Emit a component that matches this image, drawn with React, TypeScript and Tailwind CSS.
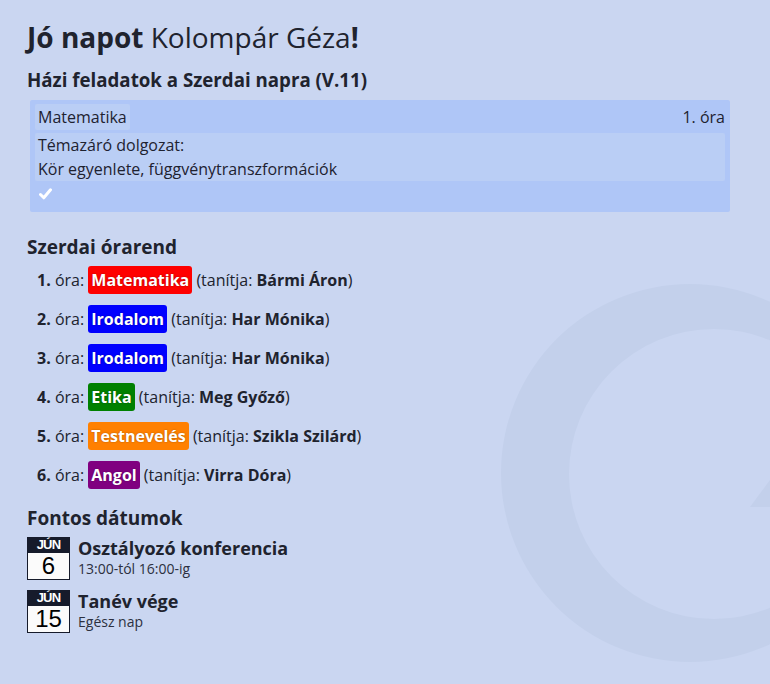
const lessons = [
  { n: 1, subject: "Matematika", color: "bg-[#ff0000]", teacher: "Bármi Áron" },
  { n: 2, subject: "Irodalom", color: "bg-[#0000ff]", teacher: "Har Mónika" },
  { n: 3, subject: "Irodalom", color: "bg-[#0000ff]", teacher: "Har Mónika" },
  { n: 4, subject: "Etika", color: "bg-[#008000]", teacher: "Meg Győző" },
  { n: 5, subject: "Testnevelés", color: "bg-[#ff8000]", teacher: "Szikla Szilárd" },
  { n: 6, subject: "Angol", color: "bg-[#800080]", teacher: "Virra Dóra" },
];

const dates = [
  { month: "JÚN", day: "6", title: "Osztályozó konferencia", sub: "13:00-tól 16:00-ig" },
  { month: "JÚN", day: "15", title: "Tanév vége", sub: "Egész nap" },
];

const CalendarIcon = ({ month, day }: { month: string; day: string }) => (
  <div className="flex flex-col w-[43px] shrink-0 font-['Liberation_Sans',Arial,sans-serif]">
    <div className="h-[16px] bg-[#161b2b] text-white text-[13px] font-bold leading-[16px] text-center tracking-[-0.8px]">
      {month}
    </div>
    <div className="h-[27px] bg-[#fbfbfb] border border-[#161b2b] border-t-0 text-[24px] leading-[26px] text-center text-black">
      {day}
    </div>
  </div>
);

export default function App() {
  return (
    <div className="relative min-h-[684px] overflow-hidden bg-[#cad6f1] text-[#20232e] font-['Open_Sans',sans-serif]">
      <svg
        className="absolute left-0 top-0 pointer-events-none"
        width="770"
        height="684"
        viewBox="0 0 770 684"
      >
        <path
          fillRule="evenodd"
          fill="#c3d0eb"
          d="M501 473a189 189 0 1 0 378 0a189 189 0 1 0 -378 0ZM569 474a145 145 0 1 0 290 0a145 145 0 1 0 -290 0Z"
        />
        <polygon fill="#c3d0eb" points="750,507 790,453 790,507" />
      </svg>

      <div className="relative px-[27px] pt-[20px]">
        <h1 className="text-[28px] leading-[34px]">
          <b>Jó napot</b> Kolompár Géza<b>!</b>
        </h1>

        <h2 className="mt-[14px] text-[18.7px] font-bold leading-[24px]">
          Házi feladatok a Szerdai napra (V.11)
        </h2>

        <div className="mt-[8px] ml-[3px] w-[700px] bg-[#afc6f7] rounded-[2px] p-[5px] pt-[4px] text-[16px] text-[#1e2230]">
          <div className="flex justify-between items-center">
            <span className="bg-[#bacef5] rounded-[2px] px-[3px] leading-[26px]">Matematika</span>
            <span className="leading-[26px]">1. óra</span>
          </div>
          <div className="mt-[3px] bg-[#bacef5] rounded-[2px] px-[3px] leading-[24px]">
            Témazáró dolgozat:
            <br />
            Kör egyenlete, függvénytranszformációk
          </div>
          <div className="h-[26px] flex items-center pl-[4px]">
            <svg width="13" height="12" viewBox="0 0 13 12">
              <path
                d="M1.5 6.5 L4.8 9.8 L11.5 1.8"
                fill="none"
                stroke="white"
                strokeWidth="3"
                strokeLinecap="round"
                strokeLinejoin="round"
              />
            </svg>
          </div>
        </div>

        <h3 className="mt-[23px] text-[19px] font-bold leading-[24px]">Szerdai órarend</h3>
        <ul className="mt-[7px] pl-[10px] text-[16px] flex flex-col gap-[11px]">
          {lessons.map((l) => (
            <li key={l.n} className="h-[28px] leading-[28px] whitespace-nowrap">
              <b>{l.n}.</b> óra:{" "}
              <span
                className={`${l.color} inline-block text-white font-bold rounded-[3px] px-[3px] leading-[28px] [text-shadow:0_0_2px_rgba(0,0,0,0.35)]`}
              >
                {l.subject}
              </span>{" "}
              (tanítja: <b>{l.teacher}</b>)
            </li>
          ))}
        </ul>

        <h3 className="mt-[17px] text-[19px] font-bold leading-[24px]">Fontos dátumok</h3>
        <div className="mt-[7px] flex flex-col gap-[10px]">
          {dates.map((d) => (
            <div key={d.day} className="flex gap-[8px]">
              <CalendarIcon month={d.month} day={d.day} />
              <div className="flex flex-col">
                <span className="text-[18px] font-bold leading-[22px]">{d.title}</span>
                <span className="text-[14px] leading-[20px] text-[#2c3040]">{d.sub}</span>
              </div>
            </div>
          ))}
        </div>
      </div>
    </div>
  );
}
